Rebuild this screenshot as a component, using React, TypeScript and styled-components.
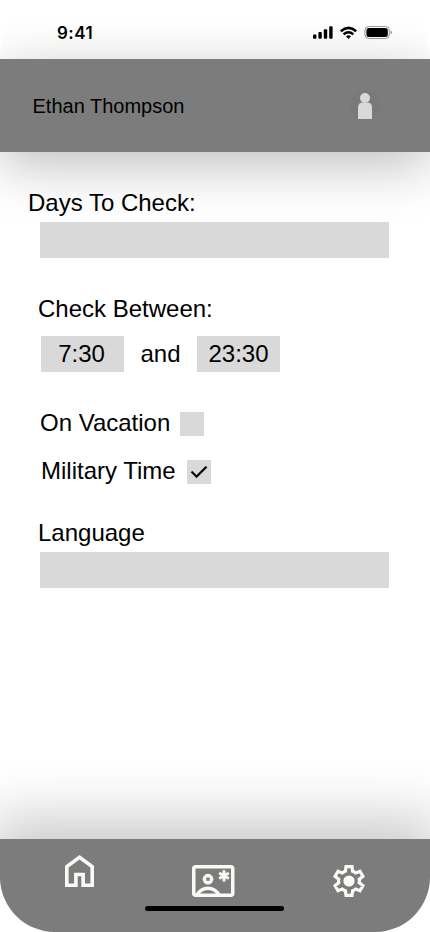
import React from 'react';
import styled, { createGlobalStyle } from 'styled-components';

const GlobalStyle = createGlobalStyle`
  *, *::before, *::after { box-sizing: border-box; }
  body { margin: 0; background: #fff; }
`;

const Screen = styled.main`
  width: 430px;
  height: 932px;
  display: flex;
  flex-direction: column;
  overflow: hidden;
  border-radius: 55px;
  background: #fff;
  color: #000;
  font-family: 'Liberation Sans', Arial, sans-serif;
`;

const StatusBar = styled.div`
  height: 59px;
  flex: none;
  display: flex;
  align-items: flex-start;
  justify-content: space-between;
  padding: 22px 38px 0 57px;
  z-index: 1;
`;

const Clock = styled.time`
  font: 600 17px/22px Inter, sans-serif;
  letter-spacing: 0.5px;
`;

const StatusIcons = styled.svg`
  display: block;
  margin-top: 3px;
`;

const Header = styled.header`
  height: 93px;
  flex: none;
  display: flex;
  align-items: center;
  justify-content: space-between;
  padding: 0 50px 0 32.5px;
  background: #7c7c7c;
  box-shadow: 0 13px 54px rgba(0, 0, 0, 0.26);
`;

const UserName = styled.h1`
  margin: 0;
  font-size: 20px;
  line-height: 24px;
  font-weight: 400;
`;

const Avatar = styled.div`
  width: 30px;
  height: 30px;
  display: grid;
  place-items: center;
  border-radius: 50%;
  background: #797979;
`;

const Form = styled.section`
  flex: 1;
  padding-top: 37px;
  font-size: 24px;
  line-height: 28px;
  z-index: 1;
`;

const Label = styled.div<{ $indent: number }>`
  padding-left: ${(p) => p.$indent}px;
`;

const Field = styled.div`
  width: 349px;
  height: 36px;
  margin: 5px 0 0 40px;
  background: #d9d9d9;
`;

const Group = styled.div<{ $top: number }>`
  margin-top: ${(p) => p.$top}px;
`;

const TimeRange = styled.div`
  display: grid;
  grid-template-columns: 83px 73px 83px;
  height: 36px;
  margin: 13px 0 0 41px;
  line-height: 36px;
  text-align: center;
`;

const TimeBox = styled.div<{ $inset: number }>`
  padding-right: ${(p) => p.$inset}px;
  background: #d9d9d9;
`;

const CheckRow = styled.div<{ $indent: number; $gap: number }>`
  display: flex;
  height: 28px;
  margin-bottom: 20px;
  padding-left: ${(p) => p.$indent}px;
  gap: ${(p) => p.$gap}px;
`;

const CheckBox = styled.span`
  width: 24px;
  height: 24px;
  margin-top: 3px;
  background: #d9d9d9;
`;

const CheckIcon = styled.svg`
  display: block;
`;

const Footer = styled.footer`
  height: 93px;
  flex: none;
  display: flex;
  flex-direction: column;
  align-items: center;
  background: #7c7c7c;
  box-shadow: 0 -10px 60px 10px rgba(0, 0, 0, 0.22);
`;

const Tabs = styled.nav`
  width: 100%;
  height: 67px;
  display: flex;
  align-items: flex-start;
  justify-content: space-between;
  padding: 0 65px;
`;

const Tab = styled.span<{ $top: number }>`
  display: block;
  padding-top: ${(p) => p.$top}px;
  color: #f9f9f6;

  svg { display: block; }
`;

const HomeIndicator = styled.div`
  width: 139px;
  height: 5px;
  margin-right: 1px;
  border-radius: 3px;
  background: #000;
`;

const gear =
  'm9.25 22-.4-3.2q-.325-.125-.612-.3-.288-.175-.563-.375L4.7 19.375l-2.75-4.75 2.575-1.95Q4.5 12.5 4.5 12.337v-.674q0-.163.025-.338L1.95 9.375l2.75-4.75 2.975 1.25q.275-.2.575-.375.3-.175.6-.3l.4-3.2h5.5l.4 3.2q.325.125.613.3.287.175.562.375l2.975-1.25 2.75 4.75-2.575 1.95q.025.175.025.338v.674q0 .163-.05.338l2.575 1.95-2.75 4.75-2.95-1.25q-.275.2-.575.375-.3.175-.6.3l-.4 3.2Z';

export default function App() {
  return (
    <>
      <GlobalStyle />
      <Screen>
        <StatusBar>
          <Clock>9:41</Clock>
          <StatusIcons width="79" height="14" viewBox="313 25 79 14">
            <rect x="313" y="34.5" width="3.4" height="4.3" rx="1" />
            <rect x="318.4" y="32" width="3.4" height="6.8" rx="1" />
            <rect x="323.8" y="29.2" width="3.4" height="9.6" rx="1" />
            <rect x="329.2" y="26.3" width="3.4" height="12.5" rx="1" />
            <g fill="none" stroke="#000" strokeWidth="2.5">
              <path d="M340.8 31.2q7.7-6.7 15.4 0" />
              <path d="M343.6 34.4q4.9-4.2 9.8 0" />
            </g>
            <path d="M346 36.2q2.5-2 5 0l-2.5 2.7Z" />
            <rect x="364.9" y="26.5" width="24.4" height="12" rx="3.8" fill="none" stroke="#000" strokeOpacity=".4" />
            <rect x="366.4" y="28" width="21.4" height="9" rx="2.5" />
            <path d="M390.5 30.5v4q1.5-.6 1.5-2t-1.5-2Z" opacity=".4" />
          </StatusIcons>
        </StatusBar>
        <Header>
          <UserName>Ethan Thompson</UserName>
          <Avatar>
            <svg width="14" height="26" viewBox="0 0 14 26" fill="#d9d9d9">
              <circle cx="7" cy="5" r="5" />
              <path d="M0 26V14.5Q0 9.5 5 9.5h4q5 0 5 5V26Z" />
            </svg>
          </Avatar>
        </Header>
        <Form>
          <Label $indent={28}>Days To Check:</Label>
          <Field />
          <Group $top={37}>
            <Label $indent={38}>Check Between:</Label>
            <TimeRange>
              <TimeBox $inset={2}>7:30</TimeBox>
              <span>and</span>
              <TimeBox $inset={0}>23:30</TimeBox>
            </TimeRange>
          </Group>
          <Group $top={37}>
            <CheckRow $indent={40} $gap={10}>
              On Vacation
              <CheckBox />
            </CheckRow>
            <CheckRow $indent={41} $gap={11}>
              Military Time
              <CheckBox>
                <CheckIcon width="24" height="24" viewBox="0 0 24 24">
                  <path
                    d="M9.55 18l-5.7-5.7 1.425-1.425L9.55 15.15l9.175-9.175L20.15 7.4Z"
                    stroke="#000"
                    strokeWidth=".2"
                  />
                </CheckIcon>
              </CheckBox>
            </CheckRow>
          </Group>
          <Group $top={34}>
            <Label $indent={38}>Language</Label>
            <Field />
          </Group>
        </Form>
        <Footer>
          <Tabs>
            <Tab $top={16}>
              <svg width="29" height="32" viewBox="4 3 16 18" preserveAspectRatio="none" fill="currentColor">
                <path d="M6 19h3v-6h6v6h3v-9l-6-4.5L6 10v9Zm-2 2V9l8-6 8 6v12h-7v-6h-2v6H4Z" />
              </svg>
            </Tab>
            <Tab $top={26}>
              <svg width="43" height="32" viewBox="0 0 43 32" fill="none" stroke="currentColor">
                <rect x="1.75" y="1.75" width="39" height="28.5" rx="2" strokeWidth="3.5" />
                <circle cx="16" cy="14.2" r="3.6" strokeWidth="3.5" />
                <path d="M4.5 30.5Q9 23.3 16 23.3T27.5 30.5" strokeWidth="3.5" />
                <path d="M32 5.2v11.2M27.2 8l9.6 5.6M27.2 13.6l9.6-5.6" strokeWidth="2.9" />
              </svg>
            </Tab>
            <Tab $top={26}>
              <svg width="32" height="32" viewBox="2 2 20 20" fill="currentColor">
                <clipPath id="gear-shape">
                  <path d={gear} />
                </clipPath>
                <path d={gear} fill="none" stroke="currentColor" strokeWidth="4" clipPath="url(#gear-shape)" />
                <circle cx="12" cy="12" r="3.5" />
              </svg>
            </Tab>
          </Tabs>
          <HomeIndicator />
        </Footer>
      </Screen>
    </>
  );
}
